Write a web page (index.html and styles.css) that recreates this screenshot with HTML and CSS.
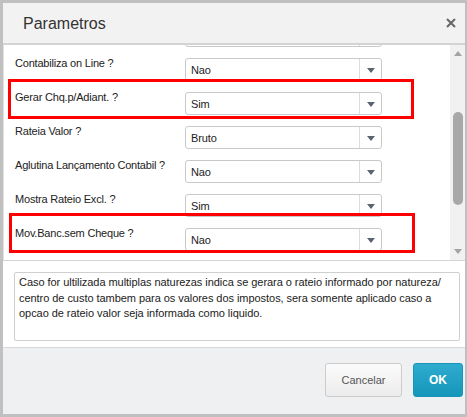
FILE: index.html
```html
<!DOCTYPE html>
<html lang="pt">
<head>
<meta charset="utf-8">
<title>Parametros</title>
<link rel="stylesheet" href="styles.css">
</head>
<body>
<div class="dialog">
  <div class="header">
    <span class="title">Parametros</span>
    <svg class="close" width="10" height="10" viewBox="0 0 10 10"><path d="M1 1L9 9M9 1L1 9" stroke="#666" stroke-width="2" fill="none"/></svg>
  </div>
  <div class="params">
    <div class="content">
      <div class="rows">
        <div class="row row-partial"><span class="label"></span><div class="select"><span class="value"></span><span class="arrow"></span></div></div>
        <div class="row"><span class="label">Contabiliza on Line ?</span><div class="select"><span class="value">Nao</span><span class="arrow"><i class="tri"></i></span></div></div>
        <div class="row"><span class="label">Gerar Chq.p/Adiant. ?</span><div class="select"><span class="value">Sim</span><span class="arrow"><i class="tri"></i></span></div></div>
        <div class="row"><span class="label">Rateia Valor ?</span><div class="select"><span class="value">Bruto</span><span class="arrow"><i class="tri"></i></span></div></div>
        <div class="row"><span class="label">Aglutina Lançamento Contabil ?</span><div class="select"><span class="value">Nao</span><span class="arrow"><i class="tri"></i></span></div></div>
        <div class="row"><span class="label">Mostra Rateio Excl. ?</span><div class="select"><span class="value">Sim</span><span class="arrow"><i class="tri"></i></span></div></div>
        <div class="row"><span class="label">Mov.Banc.sem Cheque ?</span><div class="select"><span class="value">Nao</span><span class="arrow"><i class="tri"></i></span></div></div>
      </div>
      <div class="mark mark-1"></div>
      <div class="mark mark-2"></div>
    </div>
    <div class="scrollbar">
      <div class="sb-btn"><i class="sb-up"></i></div>
      <div class="sb-track"><div class="sb-thumb"></div></div>
      <div class="sb-btn"><i class="sb-down"></i></div>
    </div>
  </div>
  <div class="desc">
    <div class="desc-box">Caso for ultilizada multiplas naturezas indica se gerara o rateio informado por natureza/<br>centro de custo tambem para os valores dos impostos, sera somente aplicado caso a<br>opcao de rateio valor seja informada como liquido.</div>
  </div>
  <div class="footer">
    <button class="btn btn-cancel">Cancelar</button>
    <button class="btn btn-ok">OK</button>
  </div>
</div>
</body>
</html>
```

FILE: styles.css
```css
* { box-sizing: border-box; }

html, body {
  margin: 0;
  padding: 0;
}

body {
  background: #c0c0c0;
  font-family: "Liberation Sans", Arial, sans-serif;
  width: 467px;
  height: 417px;
  overflow: hidden;
}

.dialog {
  margin: 3px 2px 0 3px;
  width: 462px;
  height: 411px;
  background: #fff;
  display: flex;
  flex-direction: column;
}

.header {
  height: 42px;
  flex: none;
  background: #f2f2f2;
  border-bottom: 2px solid #d3d3d3;
  display: flex;
  align-items: center;
  justify-content: space-between;
  padding: 2px 9px 0 20px;
}

.title {
  font-size: 16px;
  color: #333;
}

.close {
  display: block;
  margin-top: -3px;
}

.params {
  height: 216px;
  flex: none;
  display: flex;
  border-bottom: 1px solid #d5d5d5;
  border-left: 1px solid #e2e2e2;
}

.content {
  flex: 1;
  position: relative;
  overflow: hidden;
}

.rows {
  margin-top: -23px;
  padding-left: 11px;
}

.row {
  height: 34px;
  display: grid;
  grid-template-columns: 170px 197px;
}

.label {
  font-size: 11px;
  line-height: 14px;
  letter-spacing: -0.2px;
  color: #222;
}

.select {
  margin-top: 2px;
  height: 23px;
  border: 1px solid #c9c9c9;
  border-radius: 3px;
  display: flex;
  align-items: center;
  background: #fff;
}

.value {
  flex: 1;
  padding-left: 5px;
  font-size: 11px;
  letter-spacing: -0.1px;
  color: #222;
  padding-top: 1px;
}

.arrow {
  width: 22px;
  height: 100%;
  border-left: 1px solid #dcdcdc;
  display: flex;
  align-items: center;
  justify-content: center;
}

.tri {
  width: 0;
  height: 0;
  border-left: 4px solid transparent;
  border-right: 4px solid transparent;
  border-top: 5px solid #5b6371;
  margin-top: 1px;
}

.mark {
  position: absolute;
  border: 3px solid #ff0000;
  width: 406px;
}

.mark-1 {
  left: 4px;
  top: 34px;
  height: 40px;
}

.mark-2 {
  left: 5px;
  top: 168px;
  height: 40px;
}

.scrollbar {
  width: 15px;
  flex: none;
  background: #f1f1f1;
  display: flex;
  flex-direction: column;
}

.sb-btn {
  height: 17px;
  flex: none;
  display: flex;
  align-items: center;
  justify-content: center;
}

.sb-up {
  width: 0;
  height: 0;
  border-left: 4px solid transparent;
  border-right: 4px solid transparent;
  border-bottom: 5px solid #a3a3a3;
}

.sb-down {
  width: 0;
  height: 0;
  border-left: 4px solid transparent;
  border-right: 4px solid transparent;
  border-top: 5px solid #a3a3a3;
}

.sb-track {
  flex: 1;
  padding: 50px 2px 0 3px;
}

.sb-thumb {
  height: 93px;
  background: #a8a8a8;
  border-radius: 5px;
}

.desc {
  height: 87px;
  flex: none;
  padding: 11px 5px 0 11px;
  border-bottom: 1px solid #d8d8d8;
}

.desc-box {
  height: 69px;
  border: 1px solid #cfcfcf;
  border-radius: 2px;
  padding: 2px 4px;
  font-size: 11px;
  line-height: 15.5px;
  letter-spacing: -0.05px;
  color: #222;
  white-space: nowrap;
}

.footer {
  flex: 1;
  background: #eff0f1;
  display: flex;
  justify-content: flex-end;
  align-items: flex-start;
  gap: 11px;
  padding: 15px 2px 0 0;
}

.btn {
  height: 34px;
  border-radius: 3px;
  font-family: "Liberation Sans", Arial, sans-serif;
  font-size: 11px;
  padding: 0;
  margin: 0;
}

.btn-cancel {
  width: 77px;
  border: 1px solid #cccccc;
  background: linear-gradient(#fbfbfb, #ececec);
  color: #555;
}

.btn-ok {
  width: 50px;
  border: 1px solid #1896b8;
  background: linear-gradient(#2fabcf, #1497ba);
  color: #fff;
  font-weight: bold;
  font-size: 12px;
}
```
